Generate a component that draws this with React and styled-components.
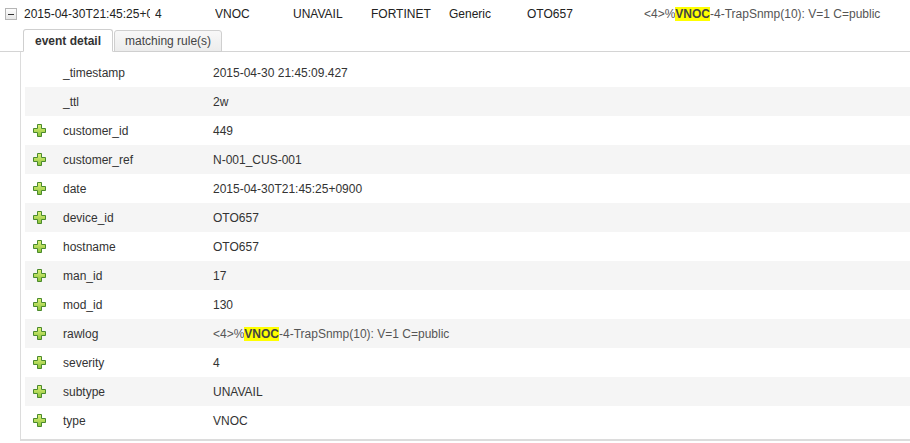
import React from "react";
import styled, { createGlobalStyle } from "styled-components";

const GlobalStyle = createGlobalStyle`
  body {
    margin: 0;
    background: #fff;
    font-family: "Liberation Sans", Arial, sans-serif;
    font-size: 12px;
    color: #333;
    overflow: hidden;
  }
`;

const Page = styled.div`
  width: 910px;
  height: 443px;
  overflow: hidden;
`;

const TopRow = styled.div`
  display: flex;
  align-items: center;
  height: 28px;
  white-space: nowrap;
`;

const Toggle = styled.div`
  box-sizing: border-box;
  flex: none;
  width: 12px;
  height: 12px;
  margin: 0 7px 0 5px;
  border: 1px solid #b5b5b5;
  background: linear-gradient(#fdfdfd, #e6e6e6);
  display: flex;
  align-items: center;
  justify-content: center;
  &::before {
    content: "";
    width: 6px;
    height: 1px;
    background: #333;
  }
`;

const Cell = styled.div`
  width: ${(p) => p.w}px;
  margin-right: ${(p) => p.gap || 0}px;
  flex: none;
  overflow: hidden;
  color: ${(p) => (p.muted ? "#555" : "#222")};
`;

const Tabs = styled.div`
  display: flex;
  align-items: flex-end;
  height: 23px;
  padding-left: 23px;
  border-bottom: 1px solid #d4d4d4;
`;

const Tab = styled.div`
  box-sizing: border-box;
  height: ${(p) => (p.active ? 23 : 22)}px;
  margin-bottom: -1px;
  margin-right: 1px;
  padding: 0 ${(p) => (p.active ? 11 : 10)}px;
  display: flex;
  align-items: center;
  border: 1px solid #cfcfcf;
  border-bottom-color: ${(p) => (p.active ? "#fff" : "#cfcfcf")};
  border-radius: 3px 3px 0 0;
  background: ${(p) => (p.active ? "#fff" : "linear-gradient(#f8f8f8, #ececec)")};
  font-weight: ${(p) => (p.active ? "bold" : "normal")};
  color: ${(p) => (p.active ? "#333" : "#444")};
`;

const Panel = styled.div`
  margin-left: 20px;
  margin-right: -20px;
  border-left: 1px solid #dcdcdc;
  border-bottom: 2px solid #dcdcdc;
  padding: 6px 0 4px 4px;
`;

const Row = styled.div`
  display: grid;
  grid-template-columns: 38px 150px 1fr;
  align-items: center;
  height: 29px;
  background: ${(p) => (p.shaded ? "#f5f5f5" : "#fff")};
`;

const IconCell = styled.div`
  padding-left: 8px;
  display: flex;
  align-items: center;
`;

const Value = styled.div`
  color: ${(p) => (p.muted ? "#555" : "#333")};
  white-space: nowrap;
`;

const Mark = styled.span`
  background: #ffff00;
  font-weight: bold;
  color: #444;
`;

const Plus = () => (
  <svg width="13" height="13" viewBox="0 0 13 13">
    <defs>
      <linearGradient id="pg" x1="0" y1="0" x2="0" y2="1">
        <stop offset="0" stopColor="#dff27a" />
        <stop offset="1" stopColor="#8cc33a" />
      </linearGradient>
    </defs>
    <path
      d="M4.5 0.5h4v4h4v4h-4v4h-4v-4h-4v-4h4z"
      fill="url(#pg)"
      stroke="#4a8a2c"
      strokeWidth="1"
    />
  </svg>
);

const RawLog = () => (
  <>
    {"<4>%"}
    <Mark>VNOC</Mark>
    {"-4-TrapSnmp(10): V=1 C=public"}
  </>
);

const fields = [
  { key: "_timestamp", value: "2015-04-30 21:45:09.427", plus: false },
  { key: "_ttl", value: "2w", plus: false },
  { key: "customer_id", value: "449" },
  { key: "customer_ref", value: "N-001_CUS-001" },
  { key: "date", value: "2015-04-30T21:45:25+0900" },
  { key: "device_id", value: "OTO657" },
  { key: "hostname", value: "OTO657" },
  { key: "man_id", value: "17" },
  { key: "mod_id", value: "130" },
  { key: "rawlog", raw: true },
  { key: "severity", value: "4" },
  { key: "subtype", value: "UNAVAIL" },
  { key: "type", value: "VNOC" },
];

export default function App() {
  return (
    <Page>
      <GlobalStyle />
      <TopRow>
        <Toggle />
        <Cell w={126} gap={5}>2015-04-30T21:45:25+0900</Cell>
        <Cell w={60}>4</Cell>
        <Cell w={78}>VNOC</Cell>
        <Cell w={78}>UNAVAIL</Cell>
        <Cell w={78}>FORTINET</Cell>
        <Cell w={78}>Generic</Cell>
        <Cell w={117}>OTO657</Cell>
        <Cell w={266} muted>
          <RawLog />
        </Cell>
      </TopRow>
      <Tabs>
        <Tab active>event detail</Tab>
        <Tab>matching rule(s)</Tab>
      </Tabs>
      <Panel>
        {fields.map((f, i) => (
          <Row key={f.key} shaded={i % 2 === 1}>
            <IconCell>{f.plus !== false && <Plus />}</IconCell>
            <div>{f.key}</div>
            <Value muted={f.raw}>{f.raw ? <RawLog /> : f.value}</Value>
          </Row>
        ))}
      </Panel>
    </Page>
  );
}
